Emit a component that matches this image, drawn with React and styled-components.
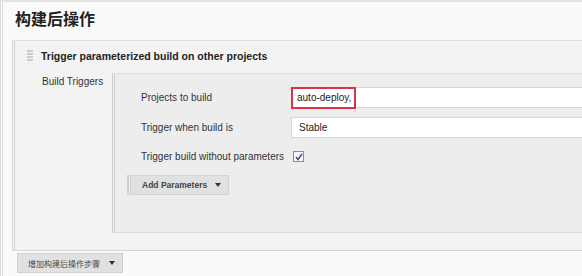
import React from "react";
import styled, { createGlobalStyle } from "styled-components";

const Global = createGlobalStyle`
  html, body { margin: 0; padding: 0; background: #fafafa; }
  body { font-family: "Liberation Sans", Arial, sans-serif; color: #333; overflow: hidden; }
`;

const Page = styled.div`
  width: 582px;
  height: 276px;
  box-sizing: border-box;
  border-top: 2px solid #e2e2e2;
  border-left: 3px double #dcdcdc;
  background: #fafafa;
  display: flex;
  flex-direction: column;
`;

const Heading = styled.h2`
  margin: 0;
  padding: 5px 0 0 12px;
  height: 33px;
  box-sizing: border-box;
  font-family: "Noto Sans CJK SC", sans-serif;
  font-size: 16px;
  font-weight: 700;
  color: #222;
  line-height: 22px;
`;

const Section = styled.div`
  margin-left: 9px;
  margin-top: 5px;
  border-top: 1px solid #dedede;
  border-bottom: 1px solid #d6d6d6;
  border-left: 3px double #d4d4d4;
  background: #f3f3f3;
  display: flex;
  flex-direction: column;
  height: 211px;
  box-sizing: border-box;
`;

const SectionHeader = styled.div`
  display: flex;
  align-items: center;
  gap: 8px;
  height: 32px;
  padding-left: 12px;
  padding-bottom: 2px;
  box-sizing: border-box;
`;

const Grip = styled.span`
  width: 6px;
  height: 12px;
  background-image: radial-gradient(circle at 1px 1px, #cccccc 0.8px, transparent 1px);
  background-size: 2px 3px;
`;

const Title = styled.span`
  font-size: 10.5px;
  font-weight: 700;
  color: #222;
  font-family: "Liberation Sans", Arial, sans-serif;
`;

const Body = styled.div`
  display: flex;
`;

const SideLabel = styled.div`
  width: 97px;
  padding: 3px 0 0 27px;
  box-sizing: border-box;
  font-size: 10px;
  color: #333;
  flex-shrink: 0;
`;

const Panel = styled.div`
  flex: 1;
  height: 160px;
  box-sizing: border-box;
  border-top: 1px solid #dcdcdc;
  border-bottom: 1px solid #d8d8d8;
  border-left: 3px double #d0d0d0;
  background: #ededed;
  padding: 9px 0 0 26px;
  display: flex;
  flex-direction: column;
`;

const Row = styled.div`
  display: flex;
  align-items: center;
  height: ${(p) => p.$h || 30}px;
`;

const FieldLabel = styled.div`
  width: 150px;
  font-size: 10px;
  color: #333;
  white-space: nowrap;
  flex-shrink: 0;
`;

const TextBox = styled.div`
  position: relative;
  flex: 1;
  height: 21px;
  background: #fff;
  border: 1px solid #d6d6d6;
  border-right: none;
  box-sizing: border-box;
  display: flex;
  align-items: center;
  padding-left: ${(p) => p.$pad || 5}px;
  font-size: 10px;
  color: #222;
`;

const Highlight = styled.span`
  position: absolute;
  left: -1px;
  top: -1px;
  width: 65px;
  height: 22px;
  box-sizing: border-box;
  border: 2px solid #dc3148;
`;

const Check = styled.span`
  width: 9px;
  height: 9px;
  border: 1px solid #8a8aa0;
  background: #f4f4f8;
  display: inline-flex;
  align-items: center;
  justify-content: center;
  margin-left: 2px;
`;

const ButtonGroup = styled.div`
  display: flex;
  margin: 5px 0 0 -14px;
  align-self: flex-start;
`;

const GroupBar = styled.span`
  width: 2px;
  background: #d0d0d0;
  margin-right: 1px;
`;

const DropButton = styled.div`
  display: flex;
  align-items: center;
  gap: ${(p) => p.$gap || 9}px;
  height: ${(p) => p.$h || 20}px;
  padding: 0 ${(p) => p.$pr || 10}px 0 ${(p) => p.$pl || 10}px;
  box-sizing: border-box;
  background: #e1e1e1;
  border: 1px solid #d2d2d2;
  color: #444;
  font-size: ${(p) => p.$fs || 10}px;
  font-weight: ${(p) => p.$fw || 700};
  font-family: ${(p) => p.$cjk ? '"Noto Sans CJK SC", sans-serif' : '"Liberation Sans", Arial, sans-serif'};
  white-space: nowrap;
`;

const Caret = styled.span`
  width: 0;
  height: 0;
  border-left: 3px solid transparent;
  border-right: 3px solid transparent;
  border-top: 4px solid #333;
`;

const Footer = styled.div`
  padding: 2px 0 0 14px;
  display: flex;
`;

export default function App() {
  return (
    <>
      <Global />
      <Page>
        <Heading>构建后操作</Heading>
        <Section>
          <SectionHeader>
            <Grip />
            <Title>Trigger parameterized build on other projects</Title>
          </SectionHeader>
          <Body>
            <SideLabel>Build Triggers</SideLabel>
            <Panel>
              <Row $h={29}>
                <FieldLabel>Projects to build</FieldLabel>
                <TextBox>
                  auto-deploy,
                  <Highlight />
                </TextBox>
              </Row>
              <Row $h={31}>
                <FieldLabel>Trigger when build is</FieldLabel>
                <TextBox $pad={7}>Stable</TextBox>
              </Row>
              <Row $h={27}>
                <FieldLabel>Trigger build without parameters</FieldLabel>
                <Check>
                  <svg width="8" height="8" viewBox="0 0 8 8">
                    <path d="M1 4 L3 6.5 L7 1" fill="none" stroke="#3a4a8a" strokeWidth="1.4" />
                  </svg>
                </Check>
              </Row>
              <ButtonGroup>
                <GroupBar />
                <DropButton $fs={8.5} $pl={11} $pr={7} $gap={8}>
                  Add Parameters
                  <Caret />
                </DropButton>
              </ButtonGroup>
            </Panel>
          </Body>
        </Section>
        <Footer>
          <DropButton $cjk $fw={400} $fs={8} $pl={10} $pr={7} $gap={9}>
            增加构建后操作步骤
            <Caret />
          </DropButton>
        </Footer>
      </Page>
    </>
  );
}
